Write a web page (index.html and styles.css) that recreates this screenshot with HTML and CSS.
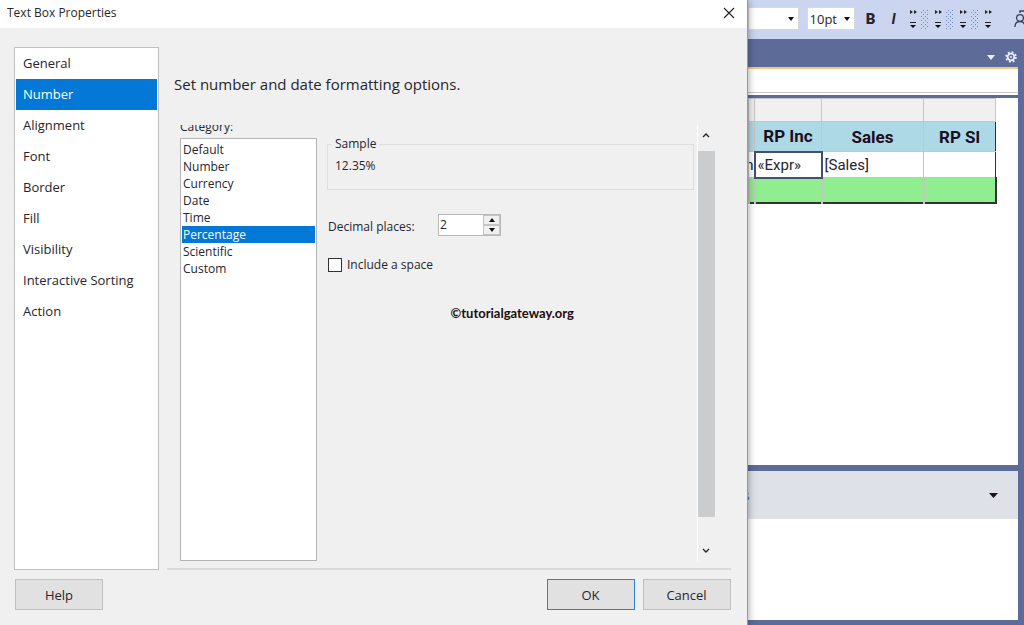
FILE: index.html
```
<!DOCTYPE html>
<html lang="en">
<head>
    <meta charset="UTF-8">
    <meta name="viewport" content="width=device-width, initial-scale=1.0">
    <title>Text Box Properties</title>
    <link rel="stylesheet" href="styles.css">
</head>
<body>
    <!-- Properties Dialog -->
    <div class="dialog" role="dialog" aria-labelledby="dialogTitle">
        <header class="title-bar">
            <span id="dialogTitle">Text Box Properties</span>
            <button class="close" aria-label="Close">
                <svg width="12" height="12" viewBox="0 0 12 12"><path d="M1 1L11 11M11 1L1 11" fill="none" stroke="#222" stroke-width="1.1"/></svg>
            </button>
        </header>

        <div class="dialog-body">
            <nav class="pages">
                <a href="#general">General</a>
                <a href="#number" class="active">Number</a>
                <a href="#alignment">Alignment</a>
                <a href="#font">Font</a>
                <a href="#border">Border</a>
                <a href="#fill">Fill</a>
                <a href="#visibility">Visibility</a>
                <a href="#sorting">Interactive Sorting</a>
                <a href="#action">Action</a>
            </nav>

            <main class="page">
                <h1>Set number and date formatting options.</h1>
                <div class="scroll-area">
                    <div class="category">
                        <label for="category">Category:</label>
                        <select id="category" size="8">
                            <option>Default</option>
                            <option>Number</option>
                            <option>Currency</option>
                            <option>Date</option>
                            <option>Time</option>
                            <option selected>Percentage</option>
                            <option>Scientific</option>
                            <option>Custom</option>
                        </select>
                    </div>

                    <div class="settings">
                        <fieldset class="sample">
                            <legend>Sample</legend>
                            <output>12.35%</output>
                        </fieldset>
                        <div class="decimals">
                            <label for="decimals">Decimal places:</label>
                            <div class="spinner">
                                <input type="text" id="decimals" value="2">
                                <div class="spin-buttons">
                                    <button aria-label="Increase"><svg width="6" height="4" viewBox="0 0 6 4"><path d="M0 4L3 0L6 4Z" fill="#111"/></svg></button>
                                    <button aria-label="Decrease"><svg width="6" height="4" viewBox="0 0 6 4"><path d="M0 0L3 4L6 0Z" fill="#111"/></svg></button>
                                </div>
                            </div>
                        </div>
                        <label class="check"><input type="checkbox">Include a space</label>
                        <p class="credit">©tutorialgateway.org</p>
                    </div>

                    <!-- Scroll Bar -->
                    <div class="scroll-bar">
                        <button aria-label="Scroll up"><svg width="8" height="6" viewBox="0 0 8 6"><path d="M1 5L4 2L7 5" fill="none" stroke="#222" stroke-width="1.3"/></svg></button>
                        <div class="thumb"></div>
                        <button aria-label="Scroll down"><svg width="8" height="6" viewBox="0 0 8 6"><path d="M1 1L4 4L7 1" fill="none" stroke="#222" stroke-width="1.3"/></svg></button>
                    </div>
                </div>
            </main>
        </div>

        <footer class="actions">
            <button class="help">Help</button>
            <button class="ok">OK</button>
            <button>Cancel</button>
        </footer>
    </div>

    <!-- Report Designer -->
    <div class="designer">
        <div class="toolbar">
            <div class="combo font-name">
                <select aria-label="Font"><option></option></select>
                <svg width="6" height="4" viewBox="0 0 6 4"><path d="M0 0H6L3 4Z" fill="#111"/></svg>
            </div>
            <div class="combo font-size">
                <select aria-label="Font size"><option>10pt</option></select>
                <svg width="6" height="4" viewBox="0 0 6 4"><path d="M0 0H6L3 4Z" fill="#111"/></svg>
            </div>
            <button class="bold" aria-label="Bold">B</button>
            <button class="italic" aria-label="Italic">I</button>
            <div class="overflow-group">
                <button aria-label="More options"><svg width="25" height="22" viewBox="0 0 25 22"><use href="#more"/><use href="#grip"/></svg></button>
                <button aria-label="More options"><svg width="25" height="22" viewBox="0 0 25 22"><use href="#more"/><use href="#grip"/></svg></button>
                <button aria-label="More options"><svg width="25" height="22" viewBox="0 0 25 22"><use href="#more"/><use href="#grip"/></svg></button>
                <button aria-label="More options"><svg width="25" height="22" viewBox="0 0 25 22"><use href="#more"/></svg></button>
            </div>
            <button class="feedback" aria-label="Feedback">
                <svg width="18" height="18" viewBox="0 0 18 18" fill="none" stroke="#33405f" stroke-width="1.3"><circle cx="6" cy="8" r="3.4"/><path d="M1 17C1 13.500 3 11.500 6 11.500S11 13.500 11 17M6 3V1H17V9H12"/></svg>
            </button>
        </div>

        <div class="tab-strip">
            <button aria-label="Open documents"><svg width="8" height="5" viewBox="0 0 8 5"><path d="M0 0H8L4 5Z" fill="#eceff8"/></svg></button>
            <button aria-label="Settings">
                <svg width="12" height="12" viewBox="0 0 12 12" fill="none" stroke="#eceff8">
                    <circle cx="6" cy="6" r="3.300" stroke-width="1.800"/>
                    <circle cx="6" cy="6" r="4.900" stroke-width="1.800" stroke-dasharray="1.900 1.948"/>
                    <circle cx="6" cy="6" r="1" fill="#eceff8" stroke="none"/>
                </svg>
            </button>
        </div>
        <div class="view-bar"></div>

        <div class="canvas">
            <table class="report">
                <colgroup><col class="c-cut"><col class="c-inc"><col class="c-sales"><col class="c-sl"></colgroup>
                <tr class="handles"><td></td><td></td><td></td><td></td></tr>
                <tr class="head"><th></th><th>RP Inc</th><th>Sales</th><th>RP Sl</th></tr>
                <tr class="detail"><td class="cut">n</td><td class="selected">«Expr»</td><td>[Sales]</td><td></td></tr>
                <tr class="total"><td></td><td></td><td></td><td></td></tr>
            </table>
        </div>

        <div class="groups">
            <div class="groups-head">
                <span>s</span>
                <button aria-label="Group options"><svg width="9" height="5" viewBox="0 0 9 5"><path d="M0 0H9L4.500 5Z" fill="#1b0f1f"/></svg></button>
            </div>
        </div>
    </div>

    <!-- Shared toolbar shapes -->
    <svg class="shapes" width="0" height="0">
        <defs>
            <pattern id="dots" width="4" height="4" patternUnits="userSpaceOnUse">
                <rect width="1" height="1" fill="#6f86b8"/>
                <rect x="2" y="2" width="1" height="1" fill="#6f86b8"/>
            </pattern>
            <g id="more">
                <path d="M1 2L4 4L1 6ZM5 2L8 4L5 6Z" fill="#222"/>
                <path d="M1 14.500H7" stroke="#222"/>
                <path d="M1 17H7L4 20Z" fill="#111"/>
            </g>
            <rect id="grip" x="12" y="1" width="7" height="20" fill="url(#dots)"/>
        </defs>
    </svg>
</body>
</html>
```
FILE: styles.css
```
/* General Styles */
* {
    box-sizing: border-box;
}

body {
    margin: 0;
    display: flex;
    min-height: 100vh;
    font-family: "Open Sans", "Noto Sans", sans-serif;
    font-size: 13px;
    line-height: 18px;
    color: #26262e;
    background-color: #5d6b99;
    overflow: hidden;
}

button,
input,
select {
    font: inherit;
    color: inherit;
}

button {
    display: flex;
    align-items: center;
    justify-content: center;
    padding: 0;
    border: none;
    background: none;
}

svg {
    display: block;
}

.shapes {
    position: absolute;
}

/* Properties Dialog */
.dialog {
    flex: 0 0 73%;
    display: flex;
    flex-direction: column;
    position: relative;
    z-index: 1;
    background-color: #f0f0f0;
    border-right: 1px solid #999;
    box-shadow: 0 0 8px rgba(0, 0, 0, 0.4);
}

.title-bar {
    display: flex;
    align-items: center;
    justify-content: space-between;
    height: 28px;
    padding: 0 12px 3px 7px;
    background-color: #fff;
    font-size: 12px;
}

.dialog-body {
    flex: 1;
    display: grid;
    grid-template-columns: 145px 1fr;
    gap: 8px;
    padding: 19px 16px 9px 14px;
}

/* Page List */
.pages {
    padding: 0 1px;
    border: 1px solid #bfbfbf;
    background-color: #fff;
}

.pages a {
    display: block;
    padding: 0 7px;
    line-height: 31px;
    color: inherit;
    text-decoration: none;
}

.pages .active {
    background-color: #0478d7;
    color: #fff;
}

/* Number Page */
.page {
    display: flex;
    flex-direction: column;
    border-bottom: 2px solid #dadada;
}

h1 {
    margin: 26px 0 30px 7px;
    font-size: 15px;
    font-weight: 400;
    line-height: 22px;
}

.scroll-area {
    flex: 1;
    display: grid;
    grid-template-columns: 137px 1fr 18px;
    margin: 0 16px 7px 13px;
    font-size: 12px;
    overflow: hidden;
}

.category {
    display: flex;
    flex-direction: column;
}

.category label {
    margin-top: -7px;
    height: 20px;
}

.category select {
    flex: 1;
    padding: 2px 1px;
    border: 1px solid #b4b4b4;
    border-radius: 0;
    outline: none;
    background-color: #fff;
    overflow: hidden;
}

.category option {
    min-height: 17px;
    padding: 0 1px;
    line-height: 17px;
}

.category option:checked {
    background-image: linear-gradient(#0478d7, #0478d7);
    -webkit-text-fill-color: #fff;
}

.settings {
    padding: 10px 3px 0 10px;
}

.sample {
    height: 55px;
    margin: 0;
    padding: 4px 7px;
    border: 1px solid #dedede;
}

.sample legend {
    margin-left: -3px;
    padding: 0 3px;
}

.decimals {
    display: flex;
    align-items: center;
    margin: 24px 0 20px 1px;
}

.decimals label {
    width: 110px;
    padding-top: 4px;
}

.spinner {
    display: flex;
    width: 63px;
    height: 22px;
    border: 1px solid #b9b9b9;
    background-color: #e6e6e6;
}

.spinner input {
    flex: 1;
    min-width: 0;
    padding: 0 1px;
    border: none;
    outline: none;
    background-color: #fff;
}

.spin-buttons {
    display: flex;
    flex-direction: column;
    width: 17px;
}

.spin-buttons button {
    flex: 1;
    border: 1px solid #c4c4c4;
    background-color: #f0f0f0;
}

.check {
    display: flex;
    align-items: center;
    gap: 5px;
}

.check input {
    appearance: none;
    width: 14px;
    height: 14px;
    margin: 0 0 0 1px;
    border: 1px solid #333;
    background-color: #fff;
}

.credit {
    margin: 30px 0 0;
    padding-left: 4px;
    font-family: Lato, sans-serif;
    font-size: 13px;
    font-weight: 700;
    text-align: center;
    color: #1f0d0d;
}

/* Scroll Bar */
.scroll-bar {
    display: flex;
    flex-direction: column;
    border-left: 1px solid #fff;
}

.scroll-bar button {
    height: 20px;
}

.scroll-bar .thumb {
    flex: 1;
    margin: 6px 0 24px;
    background-color: #cbcccd;
}

/* Dialog Buttons */
.actions {
    display: flex;
    gap: 8px;
    padding: 0 16px 15px 15px;
}

.actions button {
    width: 88px;
    height: 31px;
    border: 1px solid #c0c0c0;
    background-color: #e1e1e1;
}

.actions .help {
    margin-right: auto;
}

.actions .ok {
    border-color: #2f7fd6;
}

/* Report Designer */
.designer {
    flex: 1;
    min-width: 0;
    display: flex;
    flex-direction: column;
    padding-bottom: 5px;
}

.toolbar {
    display: flex;
    align-items: center;
    height: 39px;
    padding-bottom: 2px;
    background-color: #ccd5f0;
    overflow: hidden;
}

.combo {
    position: relative;
    flex: none;
    height: 23px;
    margin-right: 8px;
}

.combo select {
    appearance: none;
    width: 100%;
    height: 100%;
    padding: 0 2px;
    border: 1px solid #d8d8d8;
    border-radius: 0;
    background-color: #fff;
}

.combo svg {
    position: absolute;
    top: 10px;
    right: 5px;
}

.font-name {
    width: 51px;
}

.font-size {
    width: 48px;
}

.bold,
.italic {
    flex: none;
    width: 16px;
    font-family: Roboto, sans-serif;
    font-size: 15px;
    font-weight: 900;
}

.italic {
    margin: 0 7px;
    font-style: italic;
    font-weight: 700;
}

.overflow-group {
    display: flex;
    flex: none;
}

.feedback {
    flex: none;
    margin-left: 5px;
}

.tab-strip {
    display: flex;
    align-items: center;
    justify-content: flex-end;
    gap: 10px;
    height: 28px;
    padding: 8px 7px 0 0;
}

.view-bar {
    height: 28px;
    margin: 0 6px 3px 0;
    border-top: 2px solid #f5c77f;
    background: linear-gradient(#c8c8c8, #c8c8c8) 0 23px / 100% 1px no-repeat #fff;
}

.canvas {
    flex: 1;
    margin-right: 6px;
    background-color: #fff;
}

/* Report Table */
.report {
    table-layout: fixed;
    width: 247px;
    border-collapse: collapse;
    border-bottom: 2px solid #333;
    font-family: Roboto, sans-serif;
    font-size: 15px;
}

.report td,
.report th {
    padding: 0 2px;
    border: 1px solid #c6c6c6;
    white-space: nowrap;
}

.report tr:not(.handles) > :last-child {
    border-right-color: #333;
}

.c-cut {
    width: 6px;
}

.c-inc {
    width: 67px;
}

.c-sales {
    width: 102px;
}

.c-sl {
    width: 72px;
}

.handles {
    height: 23px;
}

.handles td {
    background-color: #f0f0f0;
}

.head {
    height: 30px;
    font-size: 17px;
    color: #1b0f1f;
}

.head th {
    background-color: #add8e6;
}

.detail {
    height: 26px;
}

.report .cut {
    padding: 0;
    direction: rtl;
    overflow: hidden;
}

.report .selected {
    border: 2px solid #44506f;
}

.total {
    height: 25px;
}

.total td {
    border-width: 1px 2px;
    background-color: #90ee90;
}

/* Groups Pane */
.groups {
    height: 149px;
    margin: 6px 6px 0 0;
    background-color: #fff;
}

.groups-head {
    display: flex;
    align-items: center;
    justify-content: space-between;
    height: 48px;
    padding-right: 20px;
    background-color: #dee1e8;
    color: #4a63a8;
}

.groups-head span {
    margin-left: -4px;
}
```
